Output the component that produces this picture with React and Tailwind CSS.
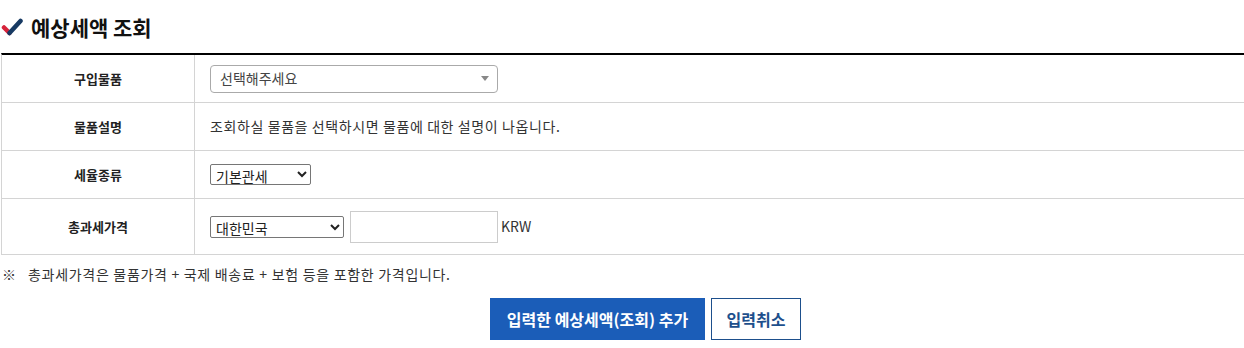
import React from "react";

const font = { fontFamily: '"Noto Sans CJK KR", "Noto Sans", sans-serif' };

function Check() {
  return (
    <svg width="22" height="20" viewBox="0 0 22 20">
      <path d="M3 10.5 L8.5 16" stroke="#d6243b" strokeWidth="4.5" strokeLinecap="round" />
      <path d="M8.5 16 L19.5 4" stroke="#173a63" strokeWidth="4.5" strokeLinecap="round" />
    </svg>
  );
}

function Row({ label, children, h = "h-[48px]" }) {
  return (
    <div className={`flex ${h} border-b border-[#d4d4d4]`}>
      <div className="w-[193px] shrink-0 border-r border-[#d4d4d4] flex items-center justify-center text-[13px] font-bold text-[#222]">
        {label}
      </div>
      <div className="flex-1 flex items-center pl-[15px] text-[14px] text-[#333]">{children}</div>
    </div>
  );
}

export default function App() {
  return (
    <div className="w-[1244px] h-[348px] bg-white" style={font}>
      <div className="flex items-center gap-[8px] pl-[1px] pt-[14px] h-[40px]">
        <Check />
        <h2 className="text-[21px] font-bold text-[#111] leading-none">예상세액 조회</h2>
      </div>

      <div className="mt-[13px] ml-[1px] border-t-2 border-black border-l border-l-[#d4d4d4]">
        <Row label="구입물품">
          <div className="w-[288px] h-[28px] border border-[#aaa] rounded-[4px] flex items-center justify-between pl-[9px] pr-[8px] text-[14px] text-[#444]">
            <span>선택해주세요</span>
            <span className="w-0 h-0 border-l-[4px] border-r-[4px] border-t-[5px] border-l-transparent border-r-transparent border-t-[#888]" />
          </div>
        </Row>
        <Row label="물품설명">
          <span className="tracking-[0.6px]">조회하실 물품을 선택하시면 물품에 대한 설명이 나옵니다.</span>
        </Row>
        <Row label="세율종류">
          <select className="w-[101px] h-[21px] border border-[#767676] rounded-[2px] text-[14px] text-[#222] bg-white pl-[1px]" style={font}>
            <option>기본관세</option>
          </select>
        </Row>
        <Row label="총과세가격" h="h-[56px]">
          <select className="w-[134px] h-[22px] border border-[#767676] rounded-[2px] text-[14px] text-[#222] bg-white pl-[1px]" style={font}>
            <option>대한민국</option>
          </select>
          <input className="ml-[6px] w-[148px] h-[32px] border border-[#ccc]" />
          <span className="ml-[3px] text-[14px] text-[#333]">KRW</span>
        </Row>
      </div>

      <p className="mt-[9px] pl-[2px] text-[14px] text-[#333] flex">
        <span className="w-[26px]">※</span>
        <span className="tracking-[0.7px]">총과세가격은 물품가격 + 국제 배송료 + 보험 등을 포함한 가격입니다.</span>
      </p>

      <div className="mt-[13px] flex justify-center gap-[6px] pl-[47px]">
        <button className="w-[215px] h-[42px] bg-[#1b5db8] text-white text-[16px] font-bold">입력한 예상세액(조회) 추가</button>
        <button className="w-[90px] h-[42px] border border-[#1d4f8c] text-[#1d4f8c] bg-white text-[16px] font-bold">입력취소</button>
      </div>
    </div>
  );
}
